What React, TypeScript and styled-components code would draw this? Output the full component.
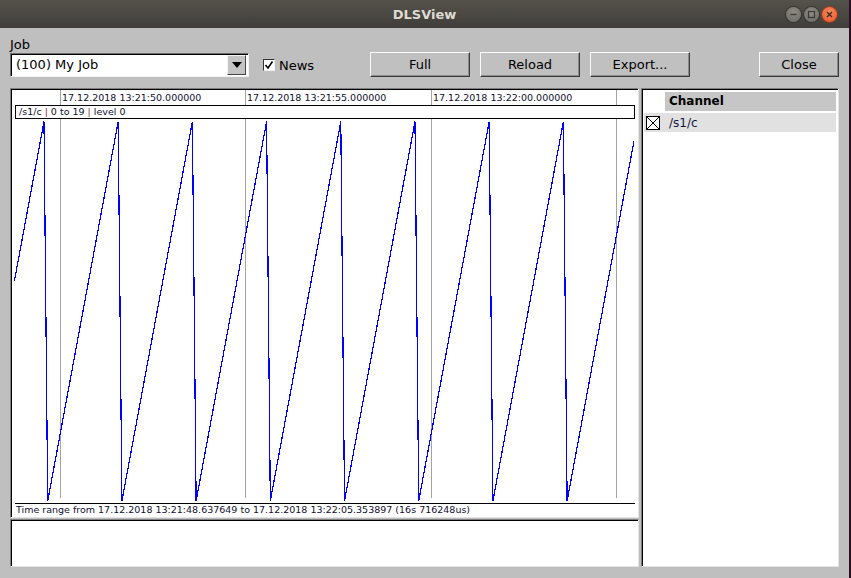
import React from "react";
import styled, { createGlobalStyle } from "styled-components";

const GlobalStyle = createGlobalStyle`
  html, body { margin: 0; padding: 0; background: #2c0a20; }
  body { width: 851px; height: 578px; overflow: hidden; font-family: "DejaVu Sans", "Noto Sans", sans-serif; }
  * { box-sizing: border-box; }
`;

const Window = styled.div`
  width: 851px;
  height: 578px;
  display: flex;
  flex-direction: column;
  background: #bfbfbf;
  border-right: 2px solid #2e0b22;
`;

const TitleBar = styled.div`
  height: 28px;
  flex: none;
  display: grid;
  grid-template-columns: 1fr auto 1fr;
  align-items: center;
  background: linear-gradient(#55524c, #403e3a);
`;

const Title = styled.div`
  grid-column: 2;
  font-family: "DejaVu Sans", sans-serif;
  font-weight: bold;
  font-size: 13px;
  color: #dfdbd2;
  padding-top: 1px;
`;

const Controls = styled.div`
  grid-column: 3;
  justify-self: end;
  display: flex;
  gap: 3px;
  padding-right: 12px;
`;

const WinButton = styled.div<{ $close?: boolean }>`
  width: 15px;
  height: 15px;
  border-radius: 50%;
  display: flex;
  align-items: center;
  justify-content: center;
  background: ${(p) =>
    p.$close
      ? "radial-gradient(circle at 50% 35%, #f98a5c, #e4542a)"
      : "radial-gradient(circle at 50% 35%, #8e8b84, #6a6863)"};
  box-shadow: 0 0 0 1px ${(p) => (p.$close ? "#9c3a1c" : "#35342f")};
`;

const Body = styled.div`
  flex: 1;
  display: flex;
  flex-direction: column;
  padding: 8px 10px 11px 10px;
`;

const Toolbar = styled.div`
  display: flex;
  align-items: flex-end;
  height: 41px;
  flex: none;
`;

const JobGroup = styled.div`
  width: 239px;
  display: flex;
  flex-direction: column;
`;

const Label = styled.div`
  font-size: 13px;
  line-height: 17px;
  color: #000;
`;

const Combo = styled.div`
  height: 24px;
  display: flex;
  align-items: stretch;
  background: #fff;
  border: 1px solid;
  border-color: #6e6e6e #f4f4f4 #f4f4f4 #6e6e6e;
  box-shadow: inset 1px 1px 0 #000;
  padding: 1px;
`;

const ComboText = styled.div`
  flex: 1;
  font-size: 13px;
  line-height: 20px;
  padding-left: 4px;
  color: #000;
`;

const ArrowButton = styled.div`
  width: 19px;
  background: #c4c4c4;
  border: 1px solid;
  border-color: #f4f4f4 #444 #444 #f4f4f4;
  display: flex;
  align-items: center;
  justify-content: center;
  margin-right: 1px;
`;

const Triangle = styled.div`
  width: 0;
  height: 0;
  border-left: 5px solid transparent;
  border-right: 5px solid transparent;
  border-top: 6px solid #000;
`;

const CheckGroup = styled.label`
  width: 107px;
  margin-left: 14px;
  height: 24px;
  display: flex;
  align-items: center;
  gap: 4px;
  font-size: 13px;
  color: #000;
`;

const CheckBox = styled.span`
  width: 12px;
  height: 12px;
  background: #fff;
  border: 1px solid;
  border-color: #333 #eee #eee #333;
  display: flex;
  align-items: center;
  justify-content: center;
`;

const Button = styled.div<{ $w?: number }>`
  width: ${(p) => p.$w ?? 100}px;
  height: 25px;
  margin-left: 10px;
  display: flex;
  align-items: center;
  justify-content: center;
  font-size: 13px;
  color: #000;
  background: #c0c0c0;
  border: 1px solid;
  border-color: #fafafa #3a3a3a #3a3a3a #fafafa;
  box-shadow: inset -1px -1px 0 #8c8c8c;
`;

const FirstButton = styled(Button)`
  margin-left: 0;
`;

const CloseButton = styled(Button)`
  margin-left: auto;
`;

const Main = styled.div`
  margin-top: 11px;
  flex: 1;
  display: flex;
  gap: 2px;
`;

const LeftColumn = styled.div`
  width: 629px;
  display: flex;
  flex-direction: column;
  gap: 1px;
`;

const Sunken = styled.div`
  background: #fff;
  border: 1px solid;
  border-color: #7f7f7f #e4e4e4 #e4e4e4 #7f7f7f;
  box-shadow: inset 1px 1px 0 #000;
`;

const ChartPanel = styled(Sunken)`
  height: 430px;
  flex: none;
  padding: 1px 0 0 1px;
`;

const LogPanel = styled(Sunken)`
  flex: 1;
`;

const RightPanel = styled(Sunken)`
  flex: 1;
  padding: 3px 2px 0 2px;
  display: flex;
  flex-direction: column;
  gap: 2px;
`;

const HeaderRow = styled.div`
  margin-left: 21px;
  height: 19px;
  background: #c6c6c6;
  font-size: 12px;
  font-weight: bold;
  line-height: 19px;
  padding-left: 4px;
  color: #000;
`;

const ChannelRow = styled.div`
  height: 19px;
  display: flex;
  align-items: center;
  background: #e1e1e1;
`;

const CheckCell = styled.div`
  width: 21px;
  padding-left: 2px;
  display: flex;
  align-items: center;
`;

const NameCell = styled.div`
  padding-left: 4px;
  font-size: 12px;
  color: #14143a;
`;

const CanvasSvg = styled.svg`
  display: block;
  font-family: "DejaVu Sans", sans-serif;
`;

function buildWave(): string {
  const pts: string[] = [];
  for (let k = 11; k <= 178; k++) {
    const x = 44 + (k - 19) * 3.71;
    const v = k % 20;
    const y = 501 - v * 19.97;
    pts.push(`${x.toFixed(2)},${y.toFixed(2)}`);
  }
  return pts.join(" ");
}

const grid = [60.5, 245.5, 431.5, 616.5];
const labels = [
  { x: 62, t: "17.12.2018 13:21:50.000000" },
  { x: 247, t: "17.12.2018 13:21:55.000000" },
  { x: 433, t: "17.12.2018 13:22:00.000000" },
];

function Chart() {
  const wave = buildWave();
  return (
    <CanvasSvg width={626} height={427} viewBox="12 90 626 427">
      {grid.map((x) => (
        <line key={x} x1={x} y1={90} x2={x} y2={498} stroke="#a3a3a3" strokeWidth={1} shapeRendering="crispEdges" />
      ))}
      {labels.map((l) => (
        <text key={l.x} x={l.x} y={100.5} fontSize={9.5} fill="#101030">
          {l.t}
        </text>
      ))}
      <rect x={15.5} y={105.5} width={619} height={13} fill="#fff" stroke="#000" strokeWidth={1} shapeRendering="crispEdges" />
      <text x={19} y={115} fontSize={9.5} fill="#101030">
        /s1/c <tspan fill="#8a2a2a">|</tspan> 0 to 19 <tspan fill="#8a2a2a">|</tspan> level 0
      </text>
      <polyline points={wave} fill="none" stroke="#0000ff" strokeWidth={1.2} shapeRendering="crispEdges" />
      <line x1={15} y1={503.5} x2={635} y2={503.5} stroke="#000" strokeWidth={1} shapeRendering="crispEdges" />
      <text x={16} y={512.5} fontSize={9.5} fill="#101030">
        Time range from 17.12.2018 13:21:48.637649 to 17.12.2018 13:22:05.353897 (16s 716248us)
      </text>
    </CanvasSvg>
  );
}

export default function App() {
  return (
    <>
      <GlobalStyle />
      <Window>
        <TitleBar>
          <Title>DLSView</Title>
          <Controls>
            <WinButton>
              <svg width="9" height="9" viewBox="0 0 9 9">
                <line x1="1.5" y1="4.5" x2="7.5" y2="4.5" stroke="#3a3935" strokeWidth="1.4" />
              </svg>
            </WinButton>
            <WinButton>
              <svg width="9" height="9" viewBox="0 0 9 9">
                <rect x="1.5" y="1.5" width="6" height="6" fill="none" stroke="#3a3935" strokeWidth="1.2" />
              </svg>
            </WinButton>
            <WinButton $close>
              <svg width="9" height="9" viewBox="0 0 9 9">
                <path d="M2 2 L7 7 M7 2 L2 7" stroke="#3a2a22" strokeWidth="1.4" />
              </svg>
            </WinButton>
          </Controls>
        </TitleBar>
        <Body>
          <Toolbar>
            <JobGroup>
              <Label>Job</Label>
              <Combo>
                <ComboText>(100) My Job</ComboText>
                <ArrowButton>
                  <Triangle />
                </ArrowButton>
              </Combo>
            </JobGroup>
            <CheckGroup>
              <CheckBox>
                <svg width="10" height="10" viewBox="0 0 10 10">
                  <path d="M1.5 5 L4 8 L8.5 1.5" fill="none" stroke="#000" strokeWidth="1.6" />
                </svg>
              </CheckBox>
              News
            </CheckGroup>
            <FirstButton>Full</FirstButton>
            <Button>Reload</Button>
            <Button>Export...</Button>
            <CloseButton $w={80}>Close</CloseButton>
          </Toolbar>
          <Main>
            <LeftColumn>
              <ChartPanel>
                <Chart />
              </ChartPanel>
              <LogPanel />
            </LeftColumn>
            <RightPanel>
              <HeaderRow>Channel</HeaderRow>
              <ChannelRow>
                <CheckCell>
                  <svg width="14" height="14" viewBox="0 0 14 14">
                    <rect x="0.5" y="0.5" width="13" height="13" fill="#fff" stroke="#000" />
                    <path d="M1 1 L13 13 M13 1 L1 13" stroke="#000" strokeWidth="1" />
                  </svg>
                </CheckCell>
                <NameCell>/s1/c</NameCell>
              </ChannelRow>
            </RightPanel>
          </Main>
        </Body>
      </Window>
    </>
  );
}
